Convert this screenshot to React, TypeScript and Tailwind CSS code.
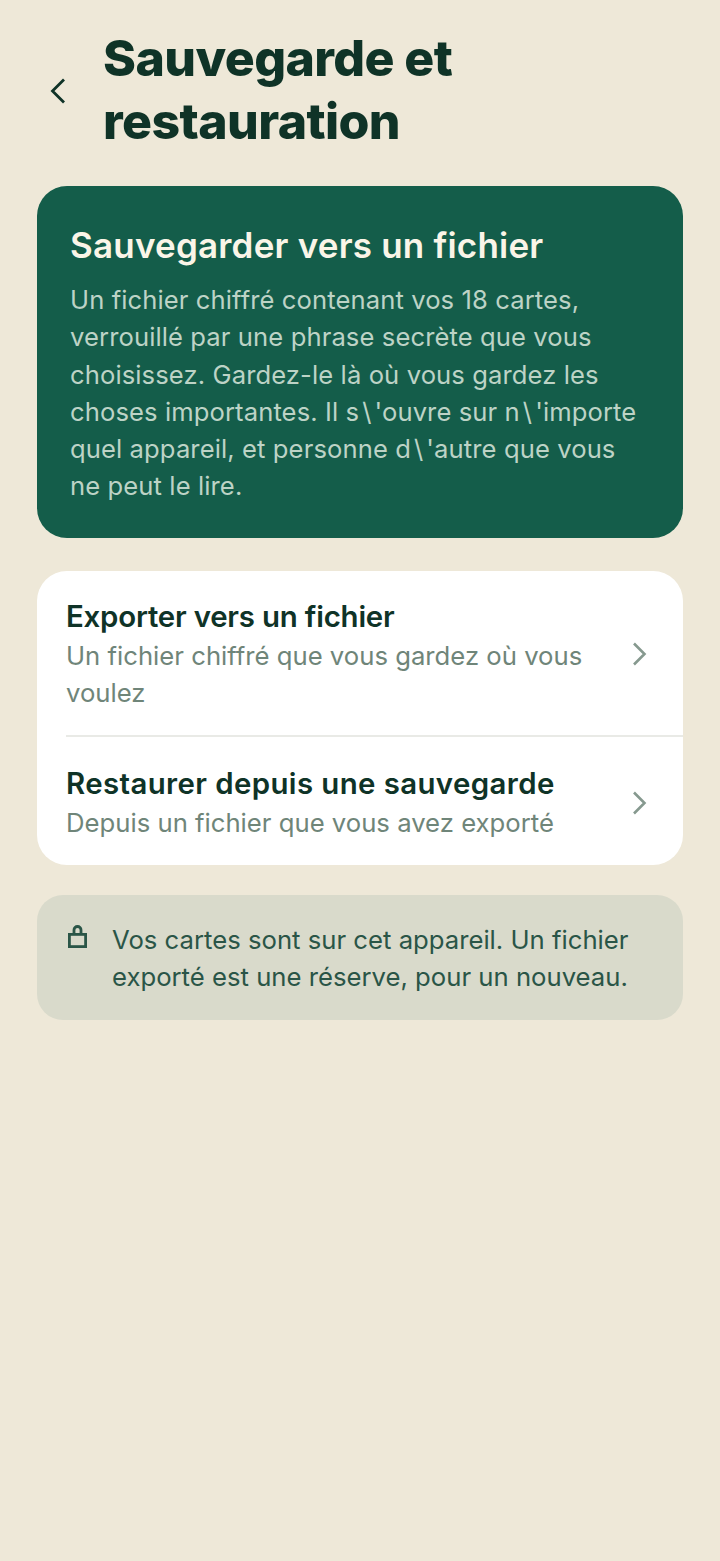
import React from "react";

const font = "font-['Inter','Liberation_Sans',sans-serif]";

const Slash = () => <span className="mx-[3px]">\</span>;

const Row = ({ title, sub, titleClass }: { title: string; sub: React.ReactNode; titleClass: string }) => (
  <div className="flex items-center justify-between">
    <div className="w-[550px]">
      <div className={`text-[29.4px] leading-[40px] font-semibold text-[#0f3327] ${titleClass}`}>{title}</div>
      <div className="text-[25.7px] leading-[37.3px] text-[#6f8579]">{sub}</div>
    </div>
    <svg width="18" height="26" viewBox="0 0 18 26" fill="none" stroke="#86998f" strokeWidth="2.6" className="mr-[35px]">
      <path d="M4 2.5 L14.5 13 L4 23.5" />
    </svg>
  </div>
);

export default function App() {
  return (
    <div className={`${font} min-h-[1561px] bg-[#eee8d8] px-[37px]`}>
      <header className="flex items-center h-[186px] pb-[6px]">
        <svg width="20" height="30" viewBox="0 0 20 30" fill="none" stroke="#0f3327" strokeWidth="2.8" className="ml-[11px] mr-[35px] mt-[2px]">
          <path d="M16 3.5 L4.5 15 L16 26.5" />
        </svg>
        <h1 className="text-[50px] leading-[63px] font-extrabold tracking-[-0.6px] text-[#0f3327]">
          Sauvegarde et
          <br />
          restauration
        </h1>
      </header>

      <section className="rounded-[30px] bg-[#145d4a] pl-[33px] pr-[33px] pt-[37px] pb-[32px]">
        <h2 className="text-[35px] leading-[44px] font-semibold tracking-[0.2px] text-[#faf5e8]">Sauvegarder vers un fichier</h2>
        <p className="mt-[14px] mb-[1px] text-[25.6px] leading-[37.3px] tracking-[0.1px] text-[#bdd3c6]">
          Un fichier chiffré contenant vos 18 cartes,
          <br />
          verrouillé par une phrase secrète que vous
          <br />
          choisissez. Gardez-le là où vous gardez les
          <br />
          choses importantes. Il s<Slash />'ouvre sur n<Slash />'importe
          <br />
          quel appareil, et personne d<Slash />'autre que vous
          <br />
          ne peut le lire.
        </p>
      </section>

      <section className="mt-[33px] rounded-[30px] bg-white pl-[29px]">
        <div className="pt-[26px] pb-[24px] border-b-2 border-[#e9eae6]">
          <Row
            title="Exporter vers un fichier"
            titleClass="tracking-[-0.2px]"
            sub={
              <>
                Un fichier chiffré que vous gardez où vous
                <br />
                voulez
              </>
            }
          />
        </div>
        <div className="pt-[27px] pb-[23px]">
          <Row title="Restaurer depuis une sauvegarde" titleClass="tracking-[0.4px]" sub="Depuis un fichier que vous avez exporté" />
        </div>
      </section>

      <section className="mt-[30px] flex rounded-[26px] bg-[#d9dacb] pl-[31px] pt-[26px] pb-[25px]">
        <svg width="19" height="24" viewBox="0 0 19 24" fill="none" stroke="#2a5547" strokeWidth="2.8" className="mt-[3px] mr-[25px]">
          <rect x="1.4" y="10.4" width="16.2" height="12.2" />
          <path d="M6 10 V6 a3.5 3.5 0 0 1 7 0 V10" />
        </svg>
        <p className="text-[25.7px] leading-[37.3px] text-[#2a5547]">
          Vos cartes sont sur cet appareil. Un fichier
          <br />
          exporté est une réserve, pour un nouveau.
        </p>
      </section>
    </div>
  );
}
